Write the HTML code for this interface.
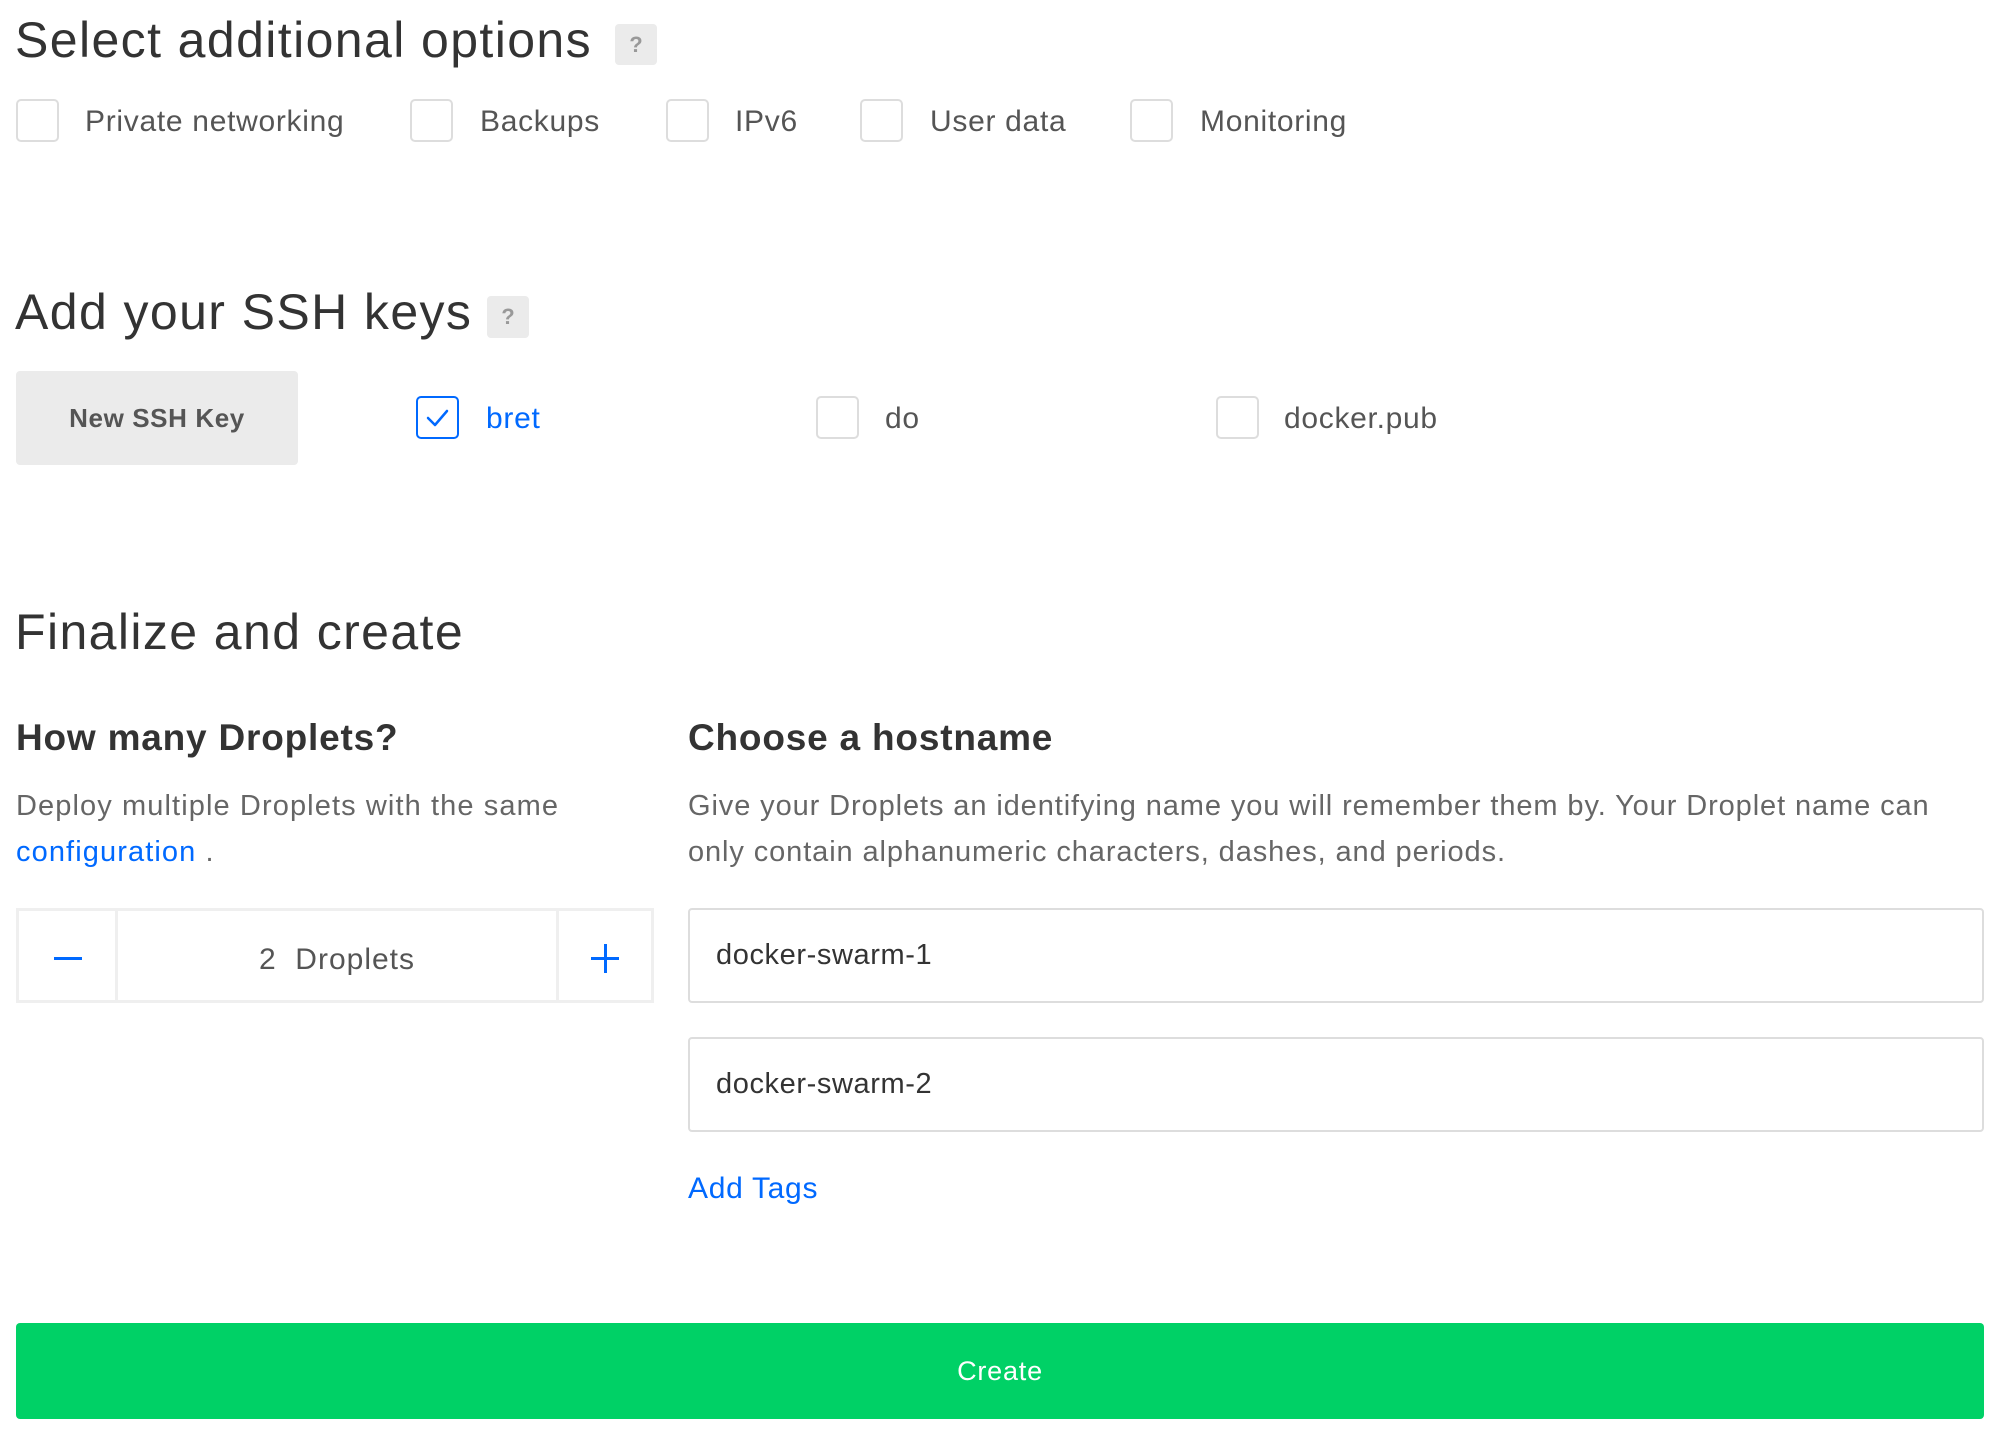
<!DOCTYPE html>
<html><head><meta charset="utf-8"><style>
*{margin:0;padding:0;box-sizing:border-box}
body{width:1998px;height:1432px;background:#fff;font-family:"Liberation Sans",sans-serif;color:#444;position:relative;overflow:hidden}
.a{position:absolute;white-space:nowrap}
.h1{font-size:50px;color:#333;line-height:1;letter-spacing:1.4px}
.q{position:absolute;background:#ebebeb;border-radius:4px;color:#999;font-size:22px;text-align:center;font-weight:bold}
.cb{position:absolute;width:43px;height:43px;border:2px solid #ddd;border-radius:5px}
.lb{position:absolute;font-size:30px;color:#555;line-height:1;letter-spacing:0.7px}
.h3{font-size:37px;font-weight:bold;color:#333;line-height:1;letter-spacing:0.8px}
.p{font-size:29px;color:#666;line-height:46px;letter-spacing:1.1px}
.in{position:absolute;left:688px;width:1296px;height:95px;border:2px solid #ddd;border-radius:4px;font-size:29px;color:#333;padding-left:26px;line-height:91px;letter-spacing:0.6px}
</style></head><body>
<div class="a h1" style="left:15px;top:15px">Select additional options</div>
<div class="q" style="left:615px;top:24px;width:42px;height:41px;line-height:41px">?</div>

<div class="cb" style="left:16px;top:99px"></div><div class="lb" style="left:85px;top:107px">Private networking</div>
<div class="cb" style="left:410px;top:99px"></div><div class="lb" style="left:480px;top:107px">Backups</div>
<div class="cb" style="left:666px;top:99px"></div><div class="lb" style="left:735px;top:107px">IPv6</div>
<div class="cb" style="left:860px;top:99px"></div><div class="lb" style="left:930px;top:107px">User data</div>
<div class="cb" style="left:1130px;top:99px"></div><div class="lb" style="left:1200px;top:107px">Monitoring</div>

<div class="a h1" style="left:15px;top:287px">Add your SSH keys</div>
<div class="q" style="left:487px;top:296px;width:42px;height:42px;line-height:42px">?</div>

<div class="a" style="left:16px;top:371px;width:282px;height:94px;background:#ebebeb;border-radius:4px;font-size:26px;font-weight:bold;color:#555;text-align:center;line-height:94px;letter-spacing:0.6px">New SSH Key</div>
<div class="cb" style="left:416px;top:396px;border-color:#0069ff">
<svg width="39" height="39" viewBox="0 0 39 39" style="position:absolute;left:0;top:0"><path d="M10 20 L17 27 L29 13" fill="none" stroke="#0069ff" stroke-width="2.5" stroke-linecap="round" stroke-linejoin="round"/></svg></div>
<div class="lb" style="left:486px;top:404px;color:#0069ff">bret</div>
<div class="cb" style="left:816px;top:396px"></div><div class="lb" style="left:885px;top:404px">do</div>
<div class="cb" style="left:1216px;top:396px"></div><div class="lb" style="left:1284px;top:404px">docker.pub</div>

<div class="a h1" style="left:15px;top:607px">Finalize and create</div>

<div class="a h3" style="left:16px;top:719px">How many Droplets?</div>
<div class="a p" style="left:16px;top:783px">Deploy multiple Droplets with the same<br><span style="color:#0069ff">configuration</span> .</div>

<div class="a" style="left:16px;top:908px;width:638px;height:95px;border:3px solid #efefef">
 <div style="position:absolute;left:96px;top:0;width:3px;height:89px;background:#efefef"></div>
 <div style="position:absolute;left:537px;top:0;width:3px;height:89px;background:#efefef"></div>
 <div style="position:absolute;left:35px;top:46px;width:28px;height:3px;background:#0069ff"></div>
 <div style="position:absolute;left:572px;top:46px;width:28px;height:3px;background:#0069ff"></div>
 <div style="position:absolute;left:585px;top:33px;width:3px;height:29px;background:#0069ff"></div>
 <div style="position:absolute;left:99px;width:438px;top:4px;line-height:89px;text-align:center;font-size:30px;color:#555;letter-spacing:1px">2&nbsp; Droplets</div>
</div>

<div class="a h3" style="left:688px;top:719px">Choose a hostname</div>
<div class="a p" style="left:688px;top:783px;letter-spacing:0.9px">Give your Droplets an identifying name you will remember them by. Your Droplet name can<br>only contain alphanumeric characters, dashes, and periods.</div>

<div class="in" style="top:908px">docker-swarm-1</div>
<div class="in" style="top:1037px">docker-swarm-2</div>
<div class="lb" style="left:688px;top:1174px;color:#0069ff">Add Tags</div>

<div class="a" style="left:16px;top:1323px;width:1968px;height:96px;background:#00d166;border-radius:4px;color:#fff;font-size:27px;text-align:center;line-height:96px;letter-spacing:0.8px">Create</div>
</body></html>
